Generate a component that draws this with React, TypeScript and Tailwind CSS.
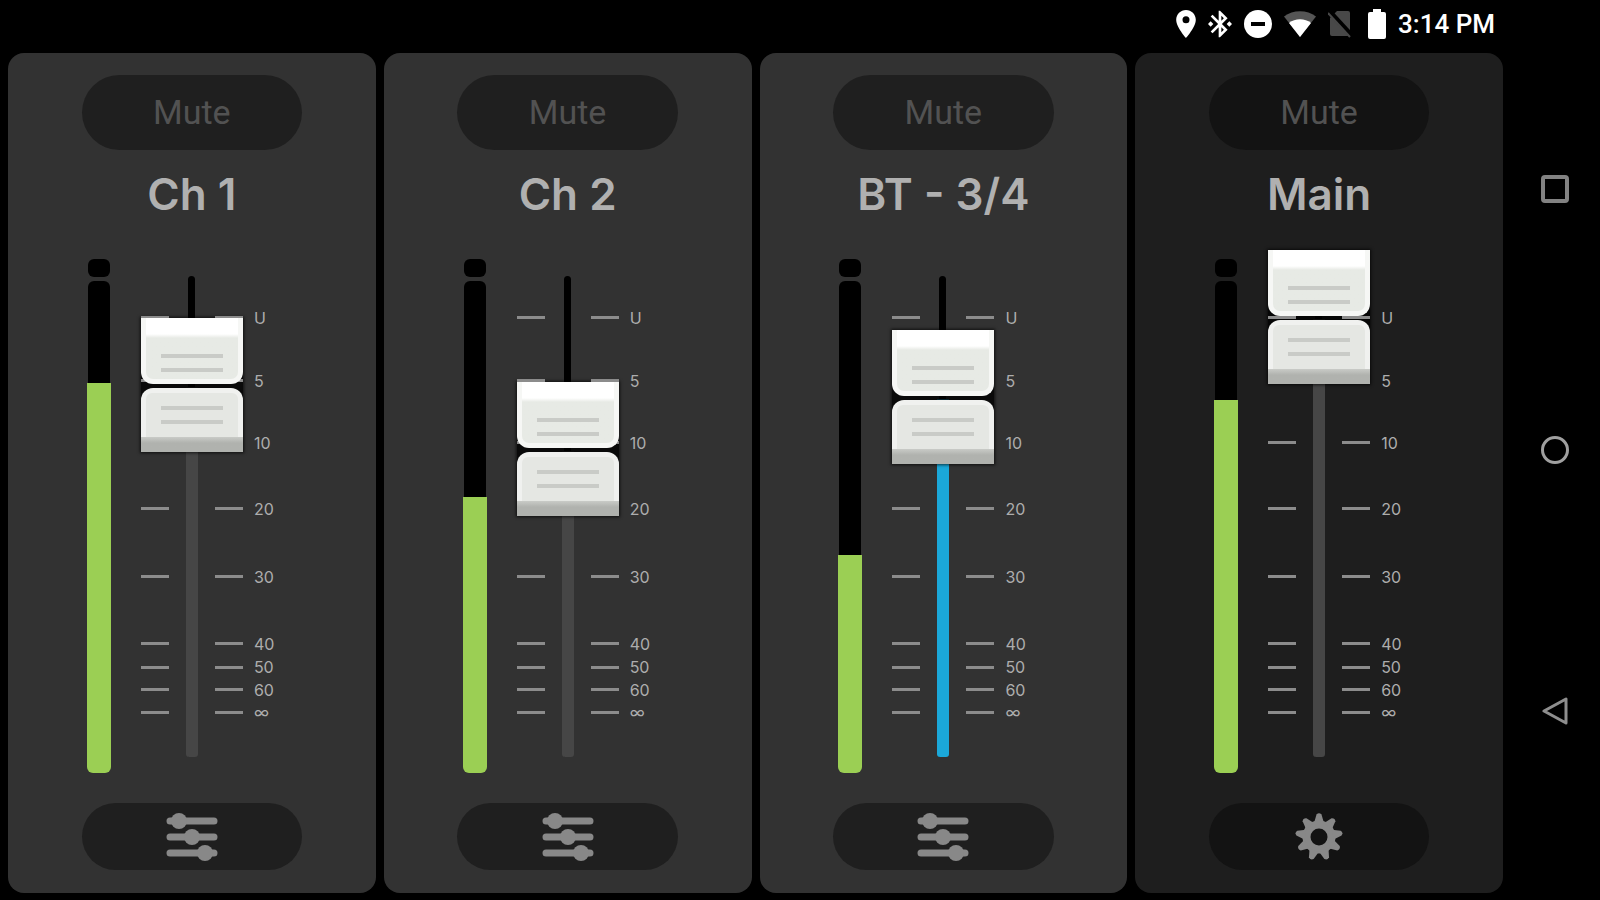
import { useId, useState } from "react";
import clsx from "clsx";

type Channel = {
	id: string;
	name: string;
	// both in percent
	level: number;
	signal: number;
	bluetooth?: boolean;
	main?: boolean;
};

const channels: Channel[] = [
	{ id: "ch1", name: "Ch 1", level: 82.5, signal: 79.3 },
	{ id: "ch2", name: "Ch 2", level: 66, signal: 56 },
	{ id: "bt", name: "BT - 3/4", level: 79.5, signal: 44.4, bluetooth: true },
	{ id: "main", name: "Main", level: 100, signal: 75.8, main: true },
];

const marks = [
	{ label: "U", top: 13 },
	{ label: "5", top: 25 },
	{ label: "10", top: 36.9 },
	{ label: "20", top: 49.5 },
	{ label: "30", top: 62.5 },
	{ label: "40", top: 75.3 },
	{ label: "50", top: 79.8 },
	{ label: "60", top: 84.1 },
	{ label: "∞", top: 88.4 },
];

export default function App() {
	return (
		<div className="flex min-h-screen bg-black">
			<div className="flex flex-1 flex-col pb-[7px] pl-2">
				<StatusBar />
				<main className="grid flex-1 grid-cols-4 gap-2">
					{channels.map((channel) => (
						<ChannelStrip key={channel.id} channel={channel} />
					))}
				</main>
			</div>
			<SystemNav />
		</div>
	);
}

function StatusBar() {
	return (
		<header className="flex h-[53px] items-center justify-end gap-3 pr-2 pb-[5px] text-white">
			<svg width="20" height="28" viewBox="5 2 14 20" fill="currentColor">
				<path d="M12 2C8.13 2 5 5.13 5 9c0 5.25 7 13 7 13s7-7.75 7-13c0-3.87-3.13-7-7-7zm0 9.500a2.500 2.500 0 1 1 0-5 2.500 2.500 0 0 1 0 5z" />
			</svg>
			<svg width="24" height="28" viewBox="3 2 18 20" fill="currentColor">
				<path d="M7 12l-2-2-2 2 2 2 2-2zm10.710-4.290L12 2h-1v7.590L6.410 5 5 6.410 10.590 12 5 17.590 6.410 19 11 14.410V22h1l5.710-5.710-4.300-4.290 4.300-4.290zM13 5.830l1.880 1.880L13 9.590V5.830zm1.880 10.460L13 18.170v-3.760l1.880 1.880zM19 10l-2 2 2 2 2-2-2-2z" />
			</svg>
			<svg width="28" height="28" viewBox="0 0 28 28">
				<circle cx="14" cy="14" r="14" fill="currentColor" />
				<path d="M7 14h14" stroke="#000" strokeWidth="4" />
			</svg>
			<svg width="32" height="26" viewBox="0 0 32 26">
				<path d="M0 5.500C9-1.500 23-1.500 32 5.500L16 26z" fill="#555" />
				<path d="M5 12C11 7 21 7 27 12L16 26z" fill="currentColor" />
			</svg>
			<svg width="24" height="28" viewBox="0 0 24 28">
				<path d="M9 1h11q2 0 2 2v21q0 2-2 2H4q-2 0-2-2V8z" fill="#484848" />
				<path d="M1 1l23 25" stroke="#000" strokeWidth="5" />
				<path d="M0 3l22 24" stroke="#484848" strokeWidth="2" />
			</svg>
			<svg
				className="ml-1"
				width="18"
				height="30"
				viewBox="0 0 18 30"
				fill="currentColor"
			>
				<path d="M5 0h8v3h3q2 0 2 2v23q0 2-2 2H2q-2 0-2-2V5q0-2 2-2h3z" />
			</svg>
			<time className="font-[Roboto,sans-serif] text-[26px] leading-8 font-medium">
				3:14 PM
			</time>
		</header>
	);
}

function ChannelStrip({ channel }: { channel: Channel }) {
	const faderId = useId();
	const [muted, setMuted] = useState(false);
	const pill = clsx(
		"flex w-3/5 items-center justify-center rounded-full",
		channel.main ? "bg-[#131313]" : "bg-[#1f1f1f]",
	);

	return (
		<section
			className={clsx(
				"flex flex-col items-center rounded-2xl pt-[22px] pb-[23px]",
				channel.main ? "bg-[#1e1e1e]" : "bg-[#323232]",
			)}
		>
			<button
				type="button"
				aria-pressed={muted}
				onClick={() => setMuted(!muted)}
				className={clsx(
					pill,
					"h-[75px] font-[Roboto,sans-serif] text-[34px]",
					muted ? "text-red-500" : "text-[#525252]",
				)}
			>
				Mute
			</button>
			<label
				htmlFor={faderId}
				className="mt-4 font-[Inter,sans-serif] text-[44px] leading-[56px] font-semibold text-[#b0b0b0]"
			>
				{channel.name}
			</label>
			<div className="mt-7 grid min-h-[523px] w-full flex-1 grid-cols-[1fr_102px_1fr]">
				<Meter name={channel.name} signal={channel.signal} />
				<Fader
					id={faderId}
					initial={channel.level}
					bluetooth={channel.bluetooth}
				/>
			</div>
			<button
				type="button"
				aria-label={`${channel.name} settings`}
				className={clsx(pill, "mt-[30px] h-[67px] text-[#888]")}
			>
				{channel.main ? <GearIcon /> : <SlidersIcon />}
			</button>
		</section>
	);
}

function Meter({ name, signal }: { name: string; signal: number }) {
	return (
		<div
			role="meter"
			aria-label={`${name} signal`}
			aria-valuenow={signal}
			className="mr-[30px] flex w-6 flex-col gap-1 justify-self-end pt-[9px]"
		>
			<div className="mx-px h-[18px] rounded-md bg-black" />
			<div className="flex flex-1 flex-col">
				<div className="mx-px flex-1 rounded-t-md bg-black" />
				<div
					className="rounded-b-md bg-[#9bcf54]"
					style={{ height: `${signal}%` }}
				/>
			</div>
		</div>
	);
}

type FaderProps = { id: string; initial: number; bluetooth?: boolean };

function Fader({ id, initial, bluetooth }: FaderProps) {
	const [level, setLevel] = useState(initial);
	// the cap is 134px high and never leaves the track
	const top = `calc((100% - 134px) * ${(100 - level) / 100})`;

	return (
		<div className="relative">
			<div className="absolute top-[26px] bottom-4 left-[47px] w-[7px] rounded-t-full bg-black" />
			<div
				className={clsx(
					"absolute bottom-4 left-[45px] w-3 rounded-b-[3px]",
					bluetooth ? "bg-[#1ba8d9]" : "bg-[#464646]",
				)}
				style={{ top: `calc(${top} + 69px)` }}
			/>
			<div
				className="absolute left-0 h-[134px] w-full bg-black/80 shadow-[0_0_3px_1px_rgba(0,0,0,0.7)]"
				style={{ top }}
			/>
			<ul className="font-[Inter,sans-serif] text-base leading-5 text-[#adadad]">
				{marks.map((mark) => (
					<li
						key={mark.label}
						className="absolute left-0 flex h-5 -translate-y-1/2 items-center"
						style={{ top: `${mark.top}%` }}
					>
						<span className="h-[3px] w-7 bg-[#8c8c8c]" />
						<span className="ml-[46px] h-[3px] w-7 bg-[#8c8c8c]" />
						<span className="ml-[11px]">{mark.label}</span>
					</li>
				))}
			</ul>
			<div
				className="absolute left-0 flex h-[134px] w-full flex-col justify-between"
				style={{ top }}
			>
				<div className="flex h-[66px] flex-col items-center gap-[10px] rounded-b-xl border-x-[5px] border-b-[5px] border-[#f6f7f5] bg-linear-to-b from-white from-[16px] to-[#e7eae5] to-[20px] pt-9">
					<span className="h-1 w-[62px] bg-[#c9cbc7]" />
					<span className="h-1 w-[62px] bg-[#c9cbc7]" />
				</div>
				<div className="flex h-16 flex-col overflow-hidden rounded-t-xl bg-[#f0f1ef]">
					<div className="mx-[5px] mt-[5px] flex flex-1 flex-col items-center gap-[10px] rounded-t-md bg-[#e5e7e3] pt-[13px]">
						<span className="h-1 w-[62px] bg-[#c9cbc7]" />
						<span className="h-1 w-[62px] bg-[#c9cbc7]" />
					</div>
					<div className="h-[15px] bg-linear-to-b from-[#c9cbc7] to-[#b0b2ae] to-40%" />
				</div>
			</div>
			<input
				id={id}
				type="range"
				min={0}
				max={100}
				step={0.5}
				value={level}
				onChange={(e) => setLevel(Number(e.target.value))}
				className="absolute inset-0 h-full w-full cursor-pointer opacity-0 [direction:rtl] [writing-mode:vertical-lr]"
			/>
		</div>
	);
}

function SlidersIcon() {
	return (
		<svg width="52" height="48" viewBox="0 0 52 48" fill="currentColor">
			<path
				d="M4 8h44M4 24h44M4 40h44"
				stroke="currentColor"
				strokeWidth="7"
				strokeLinecap="round"
			/>
			<circle cx="13" cy="8" r="8" />
			<circle cx="26" cy="24" r="8" />
			<circle cx="39" cy="40" r="8" />
		</svg>
	);
}

function GearIcon() {
	const teeth = Array.from({ length: 9 }, (_, i) => i * 40);
	return (
		<svg width="48" height="48" viewBox="-24 -24 48 48" fill="currentColor">
			<circle r="12.500" fill="none" stroke="currentColor" strokeWidth="8" />
			{teeth.map((angle) => (
				<path
					key={angle}
					d="M-5-14L-2.500-22.500Q0-25 2.500-22.500L5-14z"
					transform={`rotate(${angle})`}
				/>
			))}
		</svg>
	);
}

function SystemNav() {
	return (
		<nav className="flex w-[97px] flex-col items-center justify-between py-[175px] pl-[7px] text-[#828282]">
			<button type="button" aria-label="Overview">
				<svg width="28" height="28" viewBox="0 0 28 28" fill="none">
					<rect x="2" y="2" width="24" height="24" rx="2" stroke="currentColor" strokeWidth="4" />
				</svg>
			</button>
			<button type="button" aria-label="Home">
				<svg width="28" height="28" viewBox="0 0 28 28" fill="none">
					<circle cx="14" cy="14" r="12.500" stroke="#a0a0a0" strokeWidth="3" />
				</svg>
			</button>
			<button type="button" aria-label="Back">
				<svg width="28" height="28" viewBox="0 0 28 28" fill="none">
					<path d="M25 2v24L3 14z" stroke="#8e8e8e" strokeWidth="3" strokeLinejoin="round" />
				</svg>
			</button>
		</nav>
	);
}
